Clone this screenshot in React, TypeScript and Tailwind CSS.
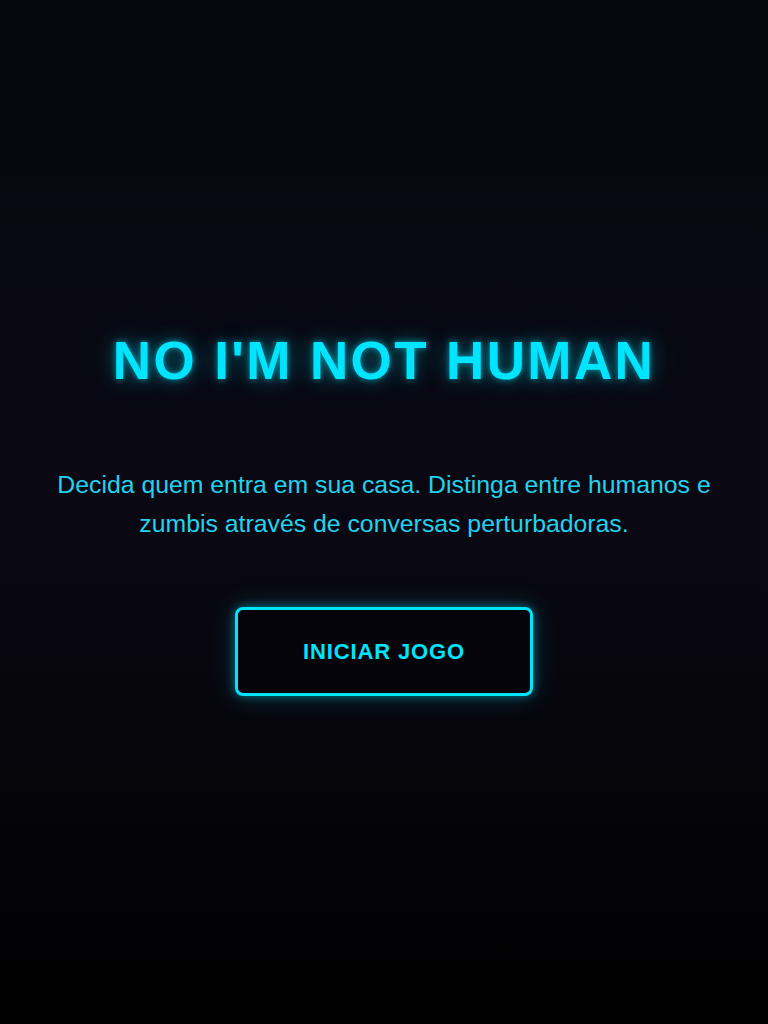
import React from "react";

export default function App() {
  return (
    <div className="min-h-screen w-full flex flex-col items-center justify-center bg-[linear-gradient(to_bottom,#06080d_0%,#0a0813_45%,#07060d_70%,#000000_100%)] font-['Liberation_Sans',Arial,sans-serif] px-6 pt-[6px]">
      {/* Title */}
      <h1 className="text-[53px] leading-none font-bold tracking-[0.045em] text-[#00e5ff] [text-shadow:0_0_6px_rgba(0,229,255,0.6),0_0_20px_rgba(0,229,255,0.35),0_0_40px_rgba(0,229,255,0.2)]">
        NO I'M NOT HUMAN
      </h1>

      {/* Description */}
      <p className="mt-[78px] max-w-[670px] text-center text-[24.8px] leading-[39px] text-[#22d3ee]">
        Decida quem entra em sua casa. Distinga entre humanos e zumbis através de conversas perturbadoras.
      </p>

      {/* Start button */}
      <button className="mt-[64px] w-[298px] h-[89px] rounded-lg border-[3px] border-[#00e5ff] bg-[#05040a] text-[#00e5ff] text-[22px] font-bold tracking-[0.04em] shadow-[0_0_10px_rgba(0,229,255,0.45),0_0_28px_rgba(0,229,255,0.2)]">
        INICIAR JOGO
      </button>
    </div>
  );
}
